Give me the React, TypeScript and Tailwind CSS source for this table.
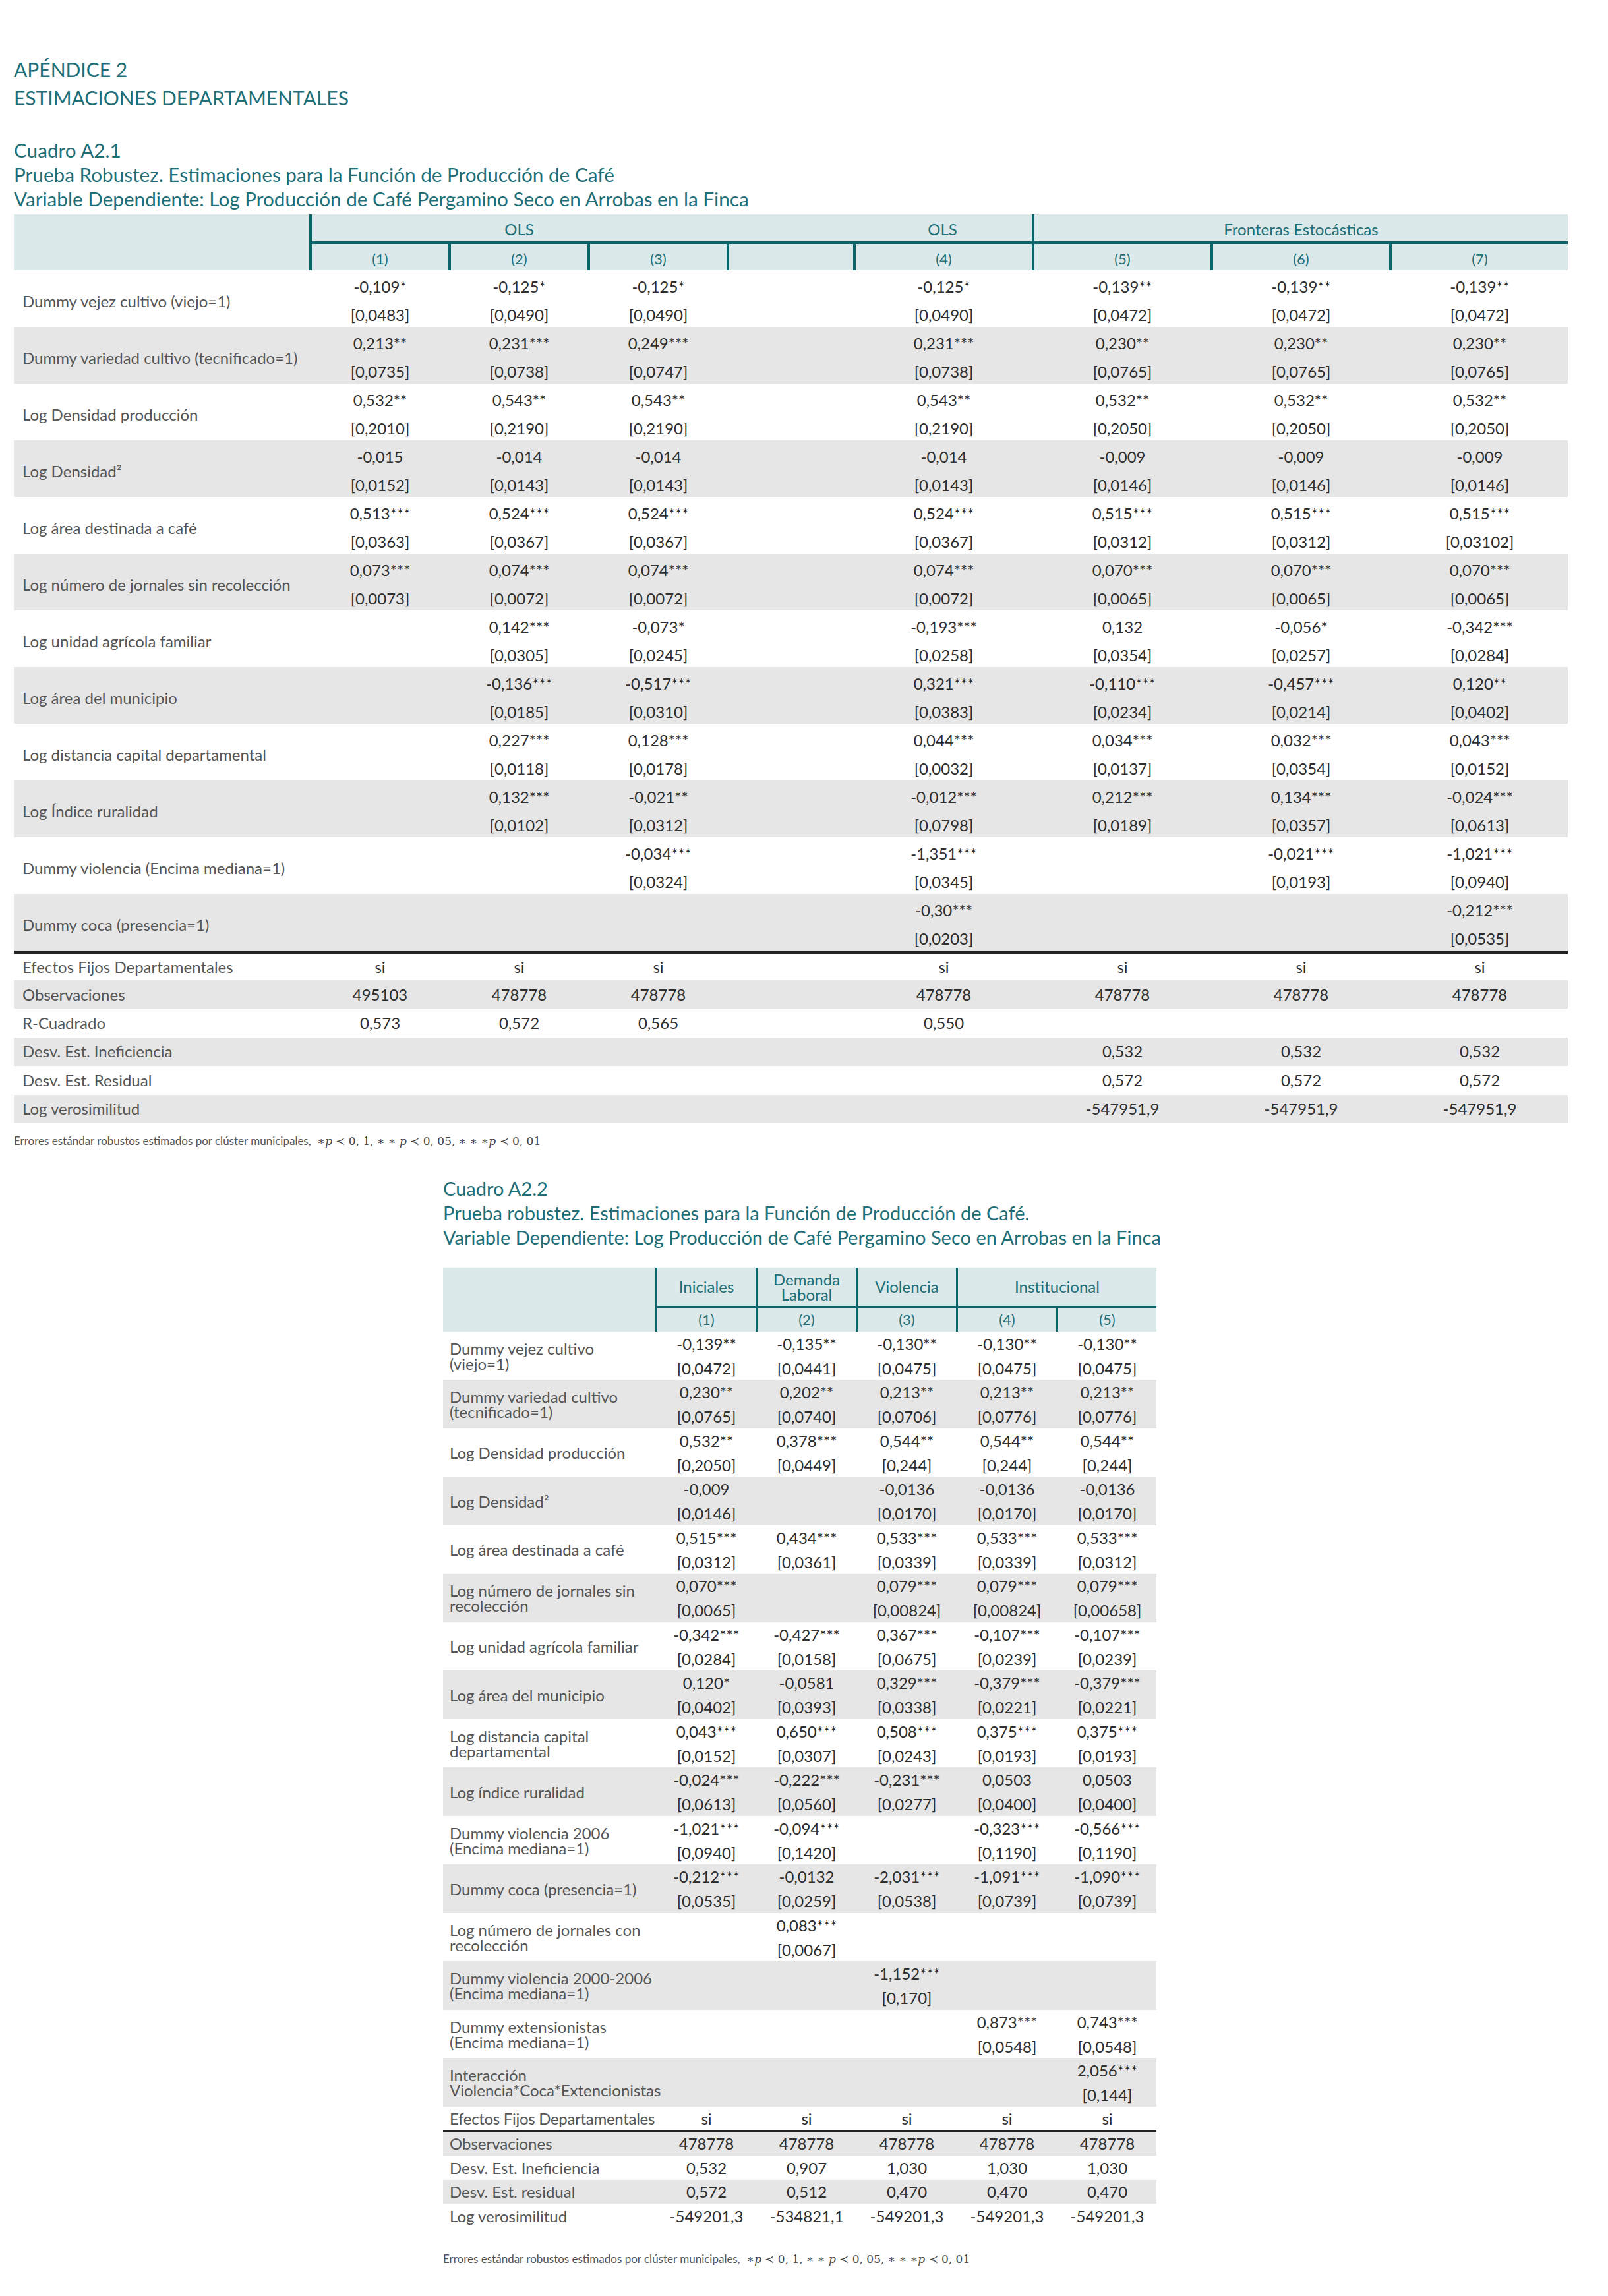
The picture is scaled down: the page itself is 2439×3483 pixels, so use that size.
import React from 'react';

type Cell = [string, string] | null;
type Row = { label: string; cells: Cell[] };

const c = (coef: string, se: string): Cell => [coef, se];

// Cuadro A2.1 — columns: (1) (2) (3) [blank] (4) (5) (6) (7)
const rowsA1: Row[] = [
    { label: 'Dummy vejez cultivo (viejo=1)', cells: [c('-0,109*', '[0,0483]'), c('-0,125*', '[0,0490]'), c('-0,125*', '[0,0490]'), null, c('-0,125*', '[0,0490]'), c('-0,139**', '[0,0472]'), c('-0,139**', '[0,0472]'), c('-0,139**', '[0,0472]')] },
    { label: 'Dummy variedad cultivo (tecnificado=1)', cells: [c('0,213**', '[0,0735]'), c('0,231***', '[0,0738]'), c('0,249***', '[0,0747]'), null, c('0,231***', '[0,0738]'), c('0,230**', '[0,0765]'), c('0,230**', '[0,0765]'), c('0,230**', '[0,0765]')] },
    { label: 'Log Densidad producción', cells: [c('0,532**', '[0,2010]'), c('0,543**', '[0,2190]'), c('0,543**', '[0,2190]'), null, c('0,543**', '[0,2190]'), c('0,532**', '[0,2050]'), c('0,532**', '[0,2050]'), c('0,532**', '[0,2050]')] },
    { label: 'Log Densidad²', cells: [c('-0,015', '[0,0152]'), c('-0,014', '[0,0143]'), c('-0,014', '[0,0143]'), null, c('-0,014', '[0,0143]'), c('-0,009', '[0,0146]'), c('-0,009', '[0,0146]'), c('-0,009', '[0,0146]')] },
    { label: 'Log área destinada a café', cells: [c('0,513***', '[0,0363]'), c('0,524***', '[0,0367]'), c('0,524***', '[0,0367]'), null, c('0,524***', '[0,0367]'), c('0,515***', '[0,0312]'), c('0,515***', '[0,0312]'), c('0,515***', '[0,03102]')] },
    { label: 'Log número de jornales sin recolección', cells: [c('0,073***', '[0,0073]'), c('0,074***', '[0,0072]'), c('0,074***', '[0,0072]'), null, c('0,074***', '[0,0072]'), c('0,070***', '[0,0065]'), c('0,070***', '[0,0065]'), c('0,070***', '[0,0065]')] },
    { label: 'Log unidad agrícola familiar', cells: [null, c('0,142***', '[0,0305]'), c('-0,073*', '[0,0245]'), null, c('-0,193***', '[0,0258]'), c('0,132', '[0,0354]'), c('-0,056*', '[0,0257]'), c('-0,342***', '[0,0284]')] },
    { label: 'Log área del municipio', cells: [null, c('-0,136***', '[0,0185]'), c('-0,517***', '[0,0310]'), null, c('0,321***', '[0,0383]'), c('-0,110***', '[0,0234]'), c('-0,457***', '[0,0214]'), c('0,120**', '[0,0402]')] },
    { label: 'Log distancia capital departamental', cells: [null, c('0,227***', '[0,0118]'), c('0,128***', '[0,0178]'), null, c('0,044***', '[0,0032]'), c('0,034***', '[0,0137]'), c('0,032***', '[0,0354]'), c('0,043***', '[0,0152]')] },
    { label: 'Log Índice ruralidad', cells: [null, c('0,132***', '[0,0102]'), c('-0,021**', '[0,0312]'), null, c('-0,012***', '[0,0798]'), c('0,212***', '[0,0189]'), c('0,134***', '[0,0357]'), c('-0,024***', '[0,0613]')] },
    { label: 'Dummy violencia (Encima mediana=1)', cells: [null, null, c('-0,034***', '[0,0324]'), null, c('-1,351***', '[0,0345]'), null, c('-0,021***', '[0,0193]'), c('-1,021***', '[0,0940]')] },
    { label: 'Dummy coca (presencia=1)', cells: [null, null, null, null, c('-0,30***', '[0,0203]'), null, null, c('-0,212***', '[0,0535]')] },
];

const statsA1: { label: string; vals: string[] }[] = [
    { label: 'Efectos Fijos Departamentales', vals: ['si', 'si', 'si', '', 'si', 'si', 'si', 'si'] },
    { label: 'Observaciones', vals: ['495103', '478778', '478778', '', '478778', '478778', '478778', '478778'] },
    { label: 'R-Cuadrado', vals: ['0,573', '0,572', '0,565', '', '0,550', '', '', ''] },
    { label: 'Desv. Est. Ineficiencia', vals: ['', '', '', '', '', '0,532', '0,532', '0,532'] },
    { label: 'Desv. Est. Residual', vals: ['', '', '', '', '', '0,572', '0,572', '0,572'] },
    { label: 'Log verosimilitud', vals: ['', '', '', '', '', '-547951,9', '-547951,9', '-547951,9'] },
];

// Cuadro A2.2 — columns (1) to (5)
const rowsA2: Row[] = [
    { label: 'Dummy vejez cultivo\n(viejo=1)', cells: [c('-0,139**', '[0,0472]'), c('-0,135**', '[0,0441]'), c('-0,130**', '[0,0475]'), c('-0,130**', '[0,0475]'), c('-0,130**', '[0,0475]')] },
    { label: 'Dummy variedad cultivo\n(tecnificado=1)', cells: [c('0,230**', '[0,0765]'), c('0,202**', '[0,0740]'), c('0,213**', '[0,0706]'), c('0,213**', '[0,0776]'), c('0,213**', '[0,0776]')] },
    { label: 'Log Densidad producción', cells: [c('0,532**', '[0,2050]'), c('0,378***', '[0,0449]'), c('0,544**', '[0,244]'), c('0,544**', '[0,244]'), c('0,544**', '[0,244]')] },
    { label: 'Log Densidad²', cells: [c('-0,009', '[0,0146]'), null, c('-0,0136', '[0,0170]'), c('-0,0136', '[0,0170]'), c('-0,0136', '[0,0170]')] },
    { label: 'Log área destinada a café', cells: [c('0,515***', '[0,0312]'), c('0,434***', '[0,0361]'), c('0,533***', '[0,0339]'), c('0,533***', '[0,0339]'), c('0,533***', '[0,0312]')] },
    { label: 'Log número de jornales sin\nrecolección', cells: [c('0,070***', '[0,0065]'), null, c('0,079***', '[0,00824]'), c('0,079***', '[0,00824]'), c('0,079***', '[0,00658]')] },
    { label: 'Log unidad agrícola familiar', cells: [c('-0,342***', '[0,0284]'), c('-0,427***', '[0,0158]'), c('0,367***', '[0,0675]'), c('-0,107***', '[0,0239]'), c('-0,107***', '[0,0239]')] },
    { label: 'Log área del municipio', cells: [c('0,120*', '[0,0402]'), c('-0,0581', '[0,0393]'), c('0,329***', '[0,0338]'), c('-0,379***', '[0,0221]'), c('-0,379***', '[0,0221]')] },
    { label: 'Log distancia capital\ndepartamental', cells: [c('0,043***', '[0,0152]'), c('0,650***', '[0,0307]'), c('0,508***', '[0,0243]'), c('0,375***', '[0,0193]'), c('0,375***', '[0,0193]')] },
    { label: 'Log índice ruralidad', cells: [c('-0,024***', '[0,0613]'), c('-0,222***', '[0,0560]'), c('-0,231***', '[0,0277]'), c('0,0503', '[0,0400]'), c('0,0503', '[0,0400]')] },
    { label: 'Dummy violencia 2006\n(Encima mediana=1)', cells: [c('-1,021***', '[0,0940]'), c('-0,094***', '[0,1420]'), null, c('-0,323***', '[0,1190]'), c('-0,566***', '[0,1190]')] },
    { label: 'Dummy coca (presencia=1)', cells: [c('-0,212***', '[0,0535]'), c('-0,0132', '[0,0259]'), c('-2,031***', '[0,0538]'), c('-1,091***', '[0,0739]'), c('-1,090***', '[0,0739]')] },
    { label: 'Log número de jornales con\nrecolección', cells: [null, c('0,083***', '[0,0067]'), null, null, null] },
    { label: 'Dummy violencia 2000-2006\n(Encima mediana=1)', cells: [null, null, c('-1,152***', '[0,170]'), null, null] },
    { label: 'Dummy extensionistas\n(Encima mediana=1)', cells: [null, null, null, c('0,873***', '[0,0548]'), c('0,743***', '[0,0548]')] },
    { label: 'Interacción\nViolencia*Coca*Extencionistas', cells: [null, null, null, null, c('2,056***', '[0,144]')] },
];

const statsA2: { label: string; vals: string[] }[] = [
    { label: 'Observaciones', vals: ['478778', '478778', '478778', '478778', '478778'] },
    { label: 'Desv. Est. Ineficiencia', vals: ['0,532', '0,907', '1,030', '1,030', '1,030'] },
    { label: 'Desv. Est. residual', vals: ['0,572', '0,512', '0,470', '0,470', '0,470'] },
    { label: 'Log verosimilitud', vals: ['-549201,3', '-534821,1', '-549201,3', '-549201,3', '-549201,3'] },
];

const Footnote = () => (
    <p className="text-[17px] leading-[20px] text-[#555]">
        Errores estándar robustos estimados por clúster municipales,
        <span className="ml-[10px] font-['DejaVu_Serif',serif] text-[17px] text-[#444]">
            ∗<i>p</i> ≺ 0, 1, ∗ ∗ <i>p</i> ≺ 0, 05, ∗ ∗ ∗<i>p</i> ≺ 0, 01
        </span>
    </p>
);

const TableA1 = () => (
    <div className="w-[2357px] text-[24px] text-[#2e2e2e]">
        {/* header */}
        <div className="flex bg-[#dce9ea] text-[#1f6f78]">
            <div className="w-[448px]" />
            <div className="flex flex-col">
                <div className="grid h-[45px] grid-cols-[633px_192px_271px_813px] border-b-4 border-[#0b666c]">
                    <div className="flex items-center justify-center border-l-4 border-[#0b666c] pt-[4px]">OLS</div>
                    <div />
                    <div className="flex items-center justify-center pt-[4px]">OLS</div>
                    <div className="flex items-center justify-center border-l-4 border-[#0b666c] pt-[4px]">Fronteras Estocásticas</div>
                </div>
                <div className="grid h-[40px] grid-cols-[211px_211px_211px_192px_271px_271px_271px_271px]">
                    {['(1)', '(2)', '(3)', '', '(4)', '(5)', '(6)', '(7)'].map((h, i) => (
                        <div key={i} className="flex items-center justify-center border-l-4 border-[#0b666c] pt-[4px] text-[22px]">{h}</div>
                    ))}
                </div>
            </div>
        </div>
        {/* coefficients */}
        {rowsA1.map((r, i) => (
            <div key={r.label} className={`grid h-[86px] grid-cols-[448px_211px_211px_211px_192px_271px_271px_271px_271px] ${i % 2 ? 'bg-[#e6e6e6]' : 'bg-white'}`}>
                <div className="flex items-center pl-[13px] pt-[5px] text-[#555]">{r.label}</div>
                {r.cells.map((cell, j) => (
                    <div key={j} className="flex flex-col items-center pl-[4px] pt-[3px] leading-[43px]">
                        {cell && (
                            <>
                                <span>{cell[0]}</span>
                                <span>{cell[1]}</span>
                            </>
                        )}
                    </div>
                ))}
            </div>
        ))}
        {/* summary */}
        <div className="border-t-[5px] border-[#222]">
            {statsA1.map((s, i) => (
                <div key={s.label} className={`grid grid-cols-[448px_211px_211px_211px_192px_271px_271px_271px_271px] ${i === 0 ? 'h-[40px]' : 'h-[43.4px]'} ${i % 2 ? 'bg-[#e6e6e6]' : 'bg-white'}`}>
                    <div className="flex items-center pl-[13px] text-[#555]">{s.label}</div>
                    {s.vals.map((v, j) => (
                        <div key={j} className="flex items-center justify-center pl-[4px]">{v}</div>
                    ))}
                </div>
            ))}
        </div>
    </div>
);

const TableA2 = () => (
    <div className="w-[1082px] text-[24px] text-[#2e2e2e]">
        {/* header */}
        <div className="flex bg-[#dce9ea] text-[#1f6f78]">
            <div className="w-[322px]" />
            <div className="flex flex-col">
                <div className="grid h-[61px] grid-cols-[152px_152px_152px_304px] border-b-[3px] border-[#0b666c]">
                    <div className="flex items-center justify-center border-l-[3px] border-[#0b666c]">Iniciales</div>
                    <div className="flex flex-col items-center justify-center border-l-[3px] border-[#0b666c] leading-[23px]">
                        <span>Demanda</span>
                        <span>Laboral</span>
                    </div>
                    <div className="flex items-center justify-center border-l-[3px] border-[#0b666c]">Violencia</div>
                    <div className="flex items-center justify-center border-l-[3px] border-[#0b666c]">Institucional</div>
                </div>
                <div className="grid h-[36px] grid-cols-[152px_152px_152px_152px_152px]">
                    {['(1)', '(2)', '(3)', '(4)', '(5)'].map((h) => (
                        <div key={h} className="flex items-center justify-center border-l-[3px] border-[#0b666c] text-[22px]">{h}</div>
                    ))}
                </div>
            </div>
        </div>
        {/* coefficients */}
        {rowsA2.map((r, i) => (
            <div key={r.label} className={`grid h-[73.5px] grid-cols-[322px_152px_152px_152px_152px_152px] ${i % 2 ? 'bg-[#e6e6e6]' : 'bg-white'}`}>
                <div className="flex items-center whitespace-pre-line pl-[10px] leading-[23px] text-[#555]">{r.label}</div>
                {r.cells.map((cell, j) => (
                    <div key={j} className="flex flex-col items-center pl-[3px] leading-[37px]">
                        {cell && (
                            <>
                                <span>{cell[0]}</span>
                                <span>{cell[1]}</span>
                            </>
                        )}
                    </div>
                ))}
            </div>
        ))}
        {/* summary */}
        <div className="grid h-[35px] grid-cols-[322px_152px_152px_152px_152px_152px] bg-white">
            <div className="flex items-center whitespace-nowrap pl-[10px] tracking-[-0.3px] text-[#555]">Efectos Fijos Departamentales</div>
            {['si', 'si', 'si', 'si', 'si'].map((v, j) => (
                <div key={j} className="flex items-center justify-center pl-[3px]">{v}</div>
            ))}
        </div>
        <div className="border-t-[3px] border-[#222]">
            {statsA2.map((s, i) => (
                <div key={s.label} className={`grid h-[36.5px] grid-cols-[322px_152px_152px_152px_152px_152px] ${i % 2 ? 'bg-white' : 'bg-[#e6e6e6]'}`}>
                    <div className="flex items-center pl-[10px] text-[#555]">{s.label}</div>
                    {s.vals.map((v, j) => (
                        <div key={j} className="flex items-center justify-center pl-[3px]">{v}</div>
                    ))}
                </div>
            ))}
        </div>
    </div>
);

export default function App() {
    return (
        <div className="min-h-[3483px] w-[2439px] bg-white pl-[21px] pt-[84px] font-['Lato',sans-serif]">
            <div className="text-[30px] leading-[43px] text-[#1f6f78]">
                <div>APÉNDICE 2</div>
                <div>ESTIMACIONES DEPARTAMENTALES</div>
            </div>

            <div className="mt-[39px] text-[29.7px] leading-[37px] text-[#1f6f78]">
                <div>Cuadro A2.1</div>
                <div>Prueba Robustez. Estimaciones para la Función de Producción de Café</div>
                <div>Variable Dependiente: Log Producción de Café Pergamino Seco en Arrobas en la Finca</div>
            </div>
            <div className="mt-[5px]">
                <TableA1 />
            </div>
            <div className="mt-[17px]">
                <Footnote />
            </div>

            <div className="ml-[651px] mt-[43px]">
                <div className="text-[29px] leading-[37px] text-[#1f6f78]">
                    <div>Cuadro A2.2</div>
                    <div>Prueba robustez. Estimaciones para la Función de Producción de Café.</div>
                    <div>Variable Dependiente: Log Producción de Café Pergamino Seco en Arrobas en la Finca</div>
                </div>
                <div className="mt-[28px]">
                    <TableA2 />
                </div>
                <div className="mt-[37px]">
                    <Footnote />
                </div>
            </div>
        </div>
    );
}
